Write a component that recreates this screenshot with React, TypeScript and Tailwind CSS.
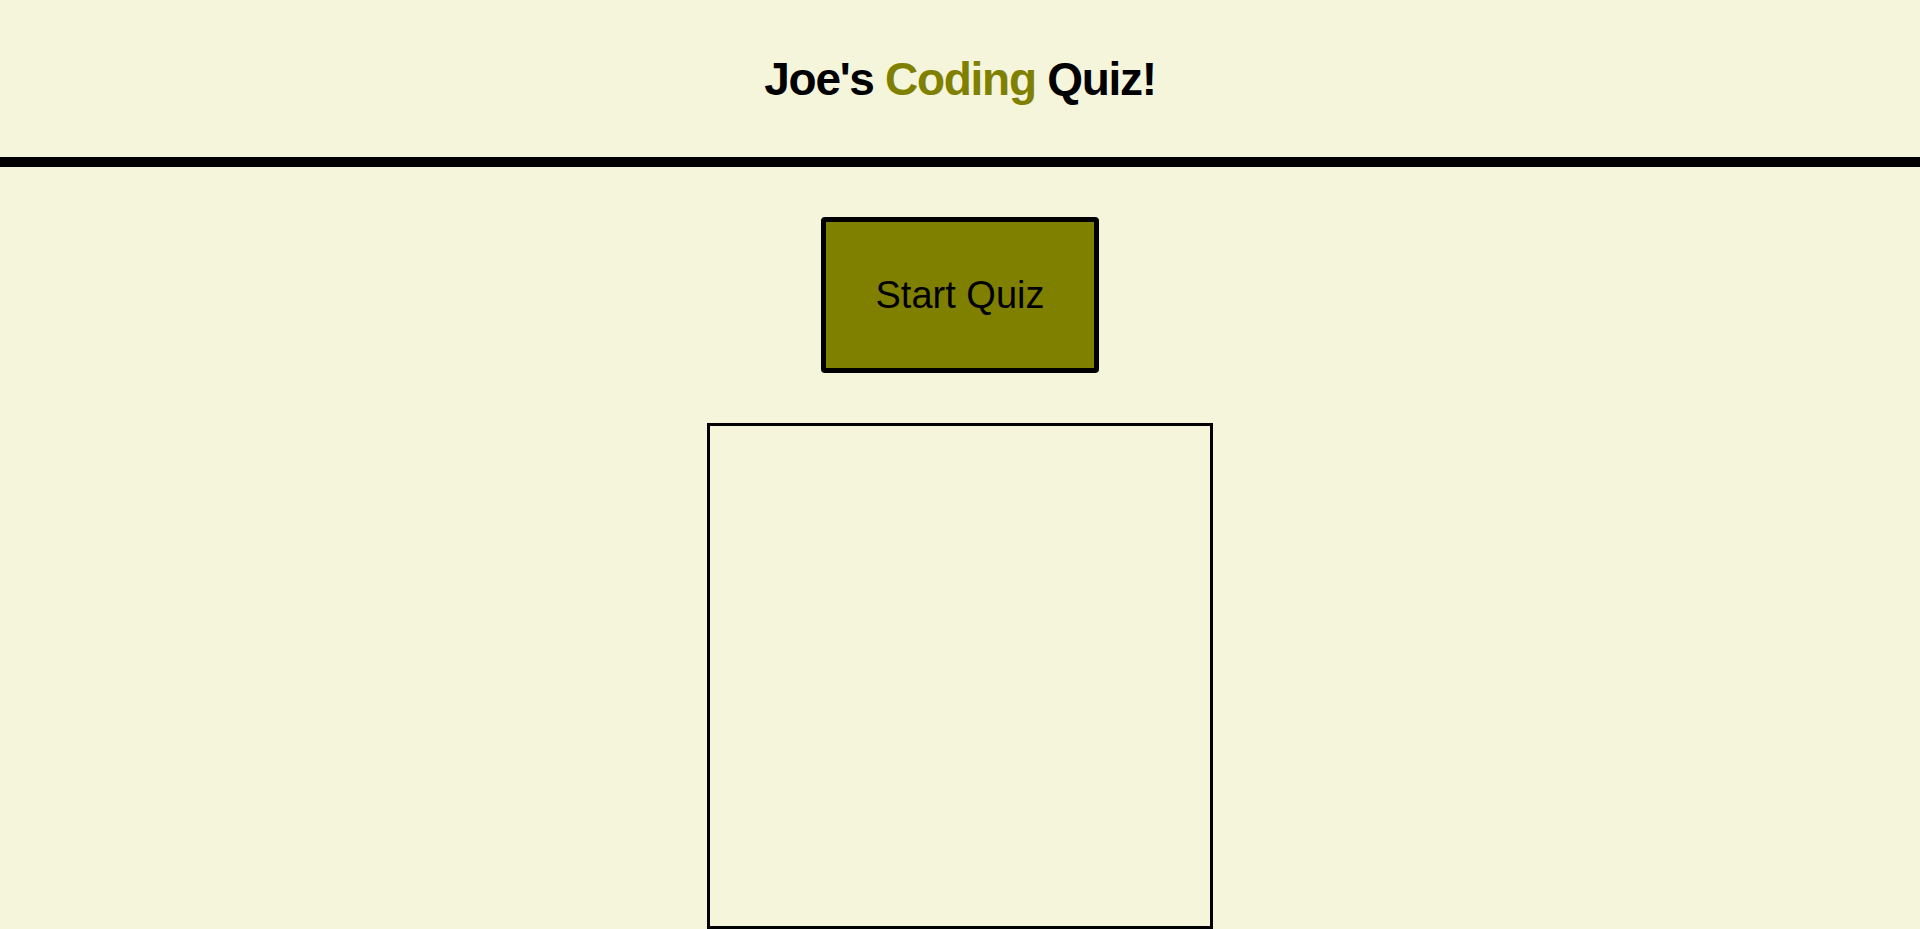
export default function App() {
  return (
    <div className="min-h-screen bg-[#f5f5dc] font-['Liberation_Sans',sans-serif] text-black">
      <header className="flex h-[167px] items-center justify-center border-b-[10px] border-black">
        <h1 className="text-[46px] font-bold leading-none tracking-[-1.3px]">
          Joe's <span className="text-[#808000]">Coding</span> Quiz!
        </h1>
      </header>

      <main className="flex flex-col items-center">
        <button className="mt-[50px] h-[156px] w-[278px] rounded-[4px] border-[5px] border-black bg-[#808000] text-[38px] leading-none text-black">
          Start Quiz
        </button>
        <div className="mt-[50px] h-[506px] w-[506px] border-[3px] border-black" />
      </main>
    </div>
  );
}
